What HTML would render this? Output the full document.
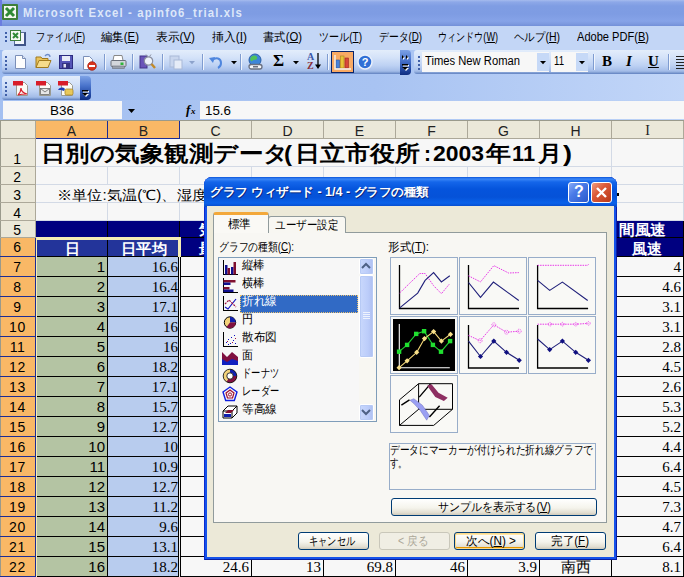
<!DOCTYPE html>
<html><head><meta charset="utf-8"><title>Microsoft Excel - apinfo6_trial.xls</title>
<style>
*{margin:0;padding:0;box-sizing:border-box}
html,body{width:684px;height:577px;overflow:hidden;background:#f7f7f7}
body{position:relative;font-family:"Liberation Sans",sans-serif;font-size:12px;color:#000}
.a{position:absolute}
.t{position:absolute;white-space:nowrap;line-height:1}
u{text-decoration:underline}
.tb{position:absolute;border-radius:3px 0 0 3px;background:linear-gradient(#e3edfb 0,#d5e3f9 30%,#bdd1f3 65%,#a3bce8 88%,#7d9bd0 95%,#5f80c0 100%)}
.cap{position:absolute;background:linear-gradient(#7da2e6 0,#4a74cc 40%,#234aa6 75%,#0f2d80 100%);border-radius:0 4px 4px 0}
.sep{position:absolute;width:1px;height:16px;background:#7f9cd0;box-shadow:1px 0 0 #f0f5fd}
.hdr{position:absolute;background:#ebe8d9;font-size:15px;text-align:center;line-height:1}
.sel{background:#f9b866}
.rn{position:absolute;left:0;width:35px;text-align:center;font-size:14px;line-height:1;letter-spacing:.6px}
.cell{position:absolute;white-space:nowrap;line-height:1}
.num{font-family:"Liberation Serif",serif;font-size:15px;text-align:right}
.btn{position:absolute;height:18px;border:1px solid #003c74;border-radius:3px;background:linear-gradient(#fff 0,#f5f4ec 55%,#e3dfd2 85%,#cfcabb 100%)}
.th{position:absolute;width:68px;height:58px;background:#f9f9f6;border:1px solid #98adc9}
</style></head><body>

<div class="a" style="left:0px;top:0px;width:684px;height:26px;background:linear-gradient(#a6bbee 0,#8da8e8 2px,#7f9de3 6px,#7e9ce3 14px,#86a3e8 21px,#7c99df 24px,#7390d8 26px);"></div>
<div class="a" style="left:0px;top:0px;width:2px;height:26px;background:#6b7de0;"></div>
<div class="a" style="left:2px;top:4px;width:16px;height:16px;background:#f4f7f0;border:2px solid #3f7f3a;border-radius:1px"></div>
<svg class="a" style="left:4px;top:6px" width="12" height="12" viewBox="0 0 12 12"><path d="M2 2L10 10M10 2L2 10" stroke="#2f8a35" stroke-width="3"/></svg>
<div class="t" style="left:23px;top:7px;font-size:12px;color:#dde7f9;font-weight:bold;letter-spacing:1.2px;transform:scaleX(0.945);transform-origin:0 0;">Microsoft Excel - apinfo6_trial.xls</div>
<div class="a" style="left:0px;top:26px;width:684px;height:24px;background:#c3d6f6;"></div>
<div class="a" style="left:5px;top:32px;width:2px;height:2px;background:#3f5fa8;"></div>
<div class="a" style="left:5px;top:36px;width:2px;height:2px;background:#3f5fa8;"></div>
<div class="a" style="left:5px;top:40px;width:2px;height:2px;background:#3f5fa8;"></div>
<div class="a" style="left:14px;top:32px;width:12px;height:14px;background:#f2f6fc;border:1px solid #5a6e9a;border-right:2px solid #3f5488;border-bottom:2px solid #3f5488"></div>
<div class="a" style="left:10px;top:30px;width:11px;height:11px;background:#f4f8f2;border:1px solid #3f7f3a"></div>
<svg class="a" style="left:11px;top:31px" width="9" height="9" viewBox="0 0 9 9"><path d="M2 2L7 7M7 2L2 7" stroke="#2f8a35" stroke-width="2"/></svg>
<div class="t" style="left:36px;top:31px;font-size:12px;transform:scaleX(0.774);transform-origin:0 0;">ファイル(<u>F</u>)</div>
<div class="t" style="left:101px;top:31px;font-size:12px;transform:scaleX(0.950);transform-origin:0 0;">編集(<u>E</u>)</div>
<div class="t" style="left:156px;top:31px;font-size:12px;transform:scaleX(0.975);transform-origin:0 0;">表示(<u>V</u>)</div>
<div class="t" style="left:212px;top:31px;font-size:12px;transform:scaleX(0.990);transform-origin:0 0;">挿入(<u>I</u>)</div>
<div class="t" style="left:263px;top:31px;font-size:12px;transform:scaleX(0.943);transform-origin:0 0;">書式(<u>O</u>)</div>
<div class="t" style="left:319px;top:31px;font-size:12px;transform:scaleX(0.837);transform-origin:0 0;">ツール(<u>T</u>)</div>
<div class="t" style="left:379px;top:31px;font-size:12px;transform:scaleX(0.816);transform-origin:0 0;">データ(<u>D</u>)</div>
<div class="t" style="left:438px;top:31px;font-size:12px;transform:scaleX(0.756);transform-origin:0 0;">ウィンドウ(<u>W</u>)</div>
<div class="t" style="left:514px;top:31px;font-size:12px;transform:scaleX(0.873);transform-origin:0 0;">ヘルプ(<u>H</u>)</div>
<div class="t" style="left:577px;top:31px;font-size:12px;transform:scaleX(0.923);transform-origin:0 0;">Adobe PDF(<u>B</u>)</div>
<div class="a" style="left:0px;top:50px;width:684px;height:51px;background:linear-gradient(90deg,#9ebcf0,#a8c3f2 55%,#c2d6f8);"></div>
<div class="tb" style="left:2px;top:50px;width:399px;height:24px"></div>
<div class="cap" style="left:400px;top:50px;width:11px;height:25px"></div>
<div class="tb" style="left:414px;top:50px;width:270px;height:24px"></div>
<div class="tb" style="left:2px;top:76px;width:79px;height:24px"></div>
<div class="cap" style="left:80px;top:76px;width:11px;height:24px"></div>
<div class="a" style="left:5px;top:56px;width:2px;height:2px;background:#3f5fa8;"></div>
<div class="a" style="left:418px;top:56px;width:2px;height:2px;background:#3f5fa8;"></div>
<div class="a" style="left:5px;top:60px;width:2px;height:2px;background:#3f5fa8;"></div>
<div class="a" style="left:418px;top:60px;width:2px;height:2px;background:#3f5fa8;"></div>
<div class="a" style="left:5px;top:64px;width:2px;height:2px;background:#3f5fa8;"></div>
<div class="a" style="left:418px;top:64px;width:2px;height:2px;background:#3f5fa8;"></div>
<div class="a" style="left:5px;top:68px;width:2px;height:2px;background:#3f5fa8;"></div>
<div class="a" style="left:418px;top:68px;width:2px;height:2px;background:#3f5fa8;"></div>
<div class="a" style="left:5px;top:82px;width:2px;height:2px;background:#3f5fa8;"></div>
<div class="a" style="left:5px;top:86px;width:2px;height:2px;background:#3f5fa8;"></div>
<div class="a" style="left:5px;top:90px;width:2px;height:2px;background:#3f5fa8;"></div>
<div class="a" style="left:5px;top:94px;width:2px;height:2px;background:#3f5fa8;"></div>
<svg class="a" style="left:400px;top:50px" width="11" height="25" viewBox="0 0 11 25"><path d="M3 6l2 2-2 2zM7 6l2 2-2 2z" fill="#fff"/><path d="M2 5l2 2-2 2zM6 5l2 2-2 2z" fill="#000"/><rect x="3" y="15" width="6" height="1.5" fill="#fff"/><path d="M3 18h6l-3 3z" fill="#fff"/><rect x="2" y="14" width="6" height="1.5" fill="#000"/><path d="M2 17h6l-3 3z" fill="#000"/></svg>
<svg class="a" style="left:80px;top:76px" width="11" height="24" viewBox="0 0 11 24"><rect x="3" y="15" width="6" height="1.5" fill="#fff"/><path d="M3 18h6l-3 3z" fill="#fff"/><rect x="2" y="14" width="6" height="1.5" fill="#000"/><path d="M2 17h6l-3 3z" fill="#000"/></svg>
<div class="sep" style="left:104px;top:54px"></div>
<div class="sep" style="left:132px;top:54px"></div>
<div class="sep" style="left:162px;top:54px"></div>
<div class="sep" style="left:202px;top:54px"></div>
<div class="sep" style="left:240px;top:54px"></div>
<div class="sep" style="left:327px;top:54px"></div>
<div class="sep" style="left:593px;top:54px"></div>
<div class="sep" style="left:668px;top:54px"></div>
<svg class="a" style="left:14px;top:54px" width="13" height="16" viewBox="0 0 13 16"><path d="M1.5 1.5h7l3 3v10h-10z" fill="#fdfdfd" stroke="#7b8fb8"/><path d="M8.5 1.5v3h3" fill="#dfe6f3" stroke="#7b8fb8"/></svg>
<svg class="a" style="left:35px;top:53px" width="17" height="16" viewBox="0 0 17 16"><path d="M1 4h5l1 1.5h6v9h-12z" fill="#e9c25a" stroke="#a07a1e"/><path d="M1 14.5l3-7h12l-3 7z" fill="#f6dc8b" stroke="#a07a1e"/><path d="M10 3c1.5-2 4-2 5 0l-1 .3" fill="none" stroke="#6d8cc8" stroke-width="1.3"/></svg>
<svg class="a" style="left:59px;top:55px" width="14" height="14" viewBox="0 0 14 14"><rect x=".5" y=".5" width="13" height="13" fill="#5555b8" stroke="#2c2c80"/><rect x="3" y="1" width="8" height="5" fill="#e8ecf8"/><rect x="3" y="8" width="8" height="5" fill="#343484"/><rect x="4.5" y="9" width="2.5" height="3.5" fill="#e0e0f0"/></svg>
<svg class="a" style="left:82px;top:55px" width="15" height="16" viewBox="0 0 15 16"><path d="M1.5 1.5h6l3 3v10h-9z" fill="#fdfdfd" stroke="#7b8fb8"/><circle cx="10" cy="11" r="4.3" fill="#d8341e" stroke="#a01808" stroke-width=".7"/><rect x="7" y="10" width="6" height="2" fill="#fff"/></svg>
<svg class="a" style="left:110px;top:54px" width="17" height="16" viewBox="0 0 17 16"><path d="M4 1.5h8l1 5h-10z" fill="#fff" stroke="#888"/><rect x="1" y="6.5" width="15" height="6" rx="1" fill="#d3d6dc" stroke="#6a6f7a"/><rect x="2.5" y="12" width="12" height="2.5" fill="#9aa0ac" stroke="#6a6f7a" stroke-width=".6"/><rect x="10.5" y="8.5" width="3" height="2.5" fill="#2fb53a"/></svg>
<svg class="a" style="left:139px;top:53px" width="17" height="17" viewBox="0 0 17 17"><rect x="1" y="3" width="7" height="12" fill="#6a55b8" stroke="#43348a"/><circle cx="9.5" cy="8" r="4.2" fill="#eef3fb" stroke="#8a8fa0" stroke-width="1.2"/><path d="M12.5 11l3.5 4" stroke="#c28a2a" stroke-width="2.4"/><path d="M7 1.5l1.5 2M12 1.5l-1.5 2" stroke="#8a8fa0"/></svg>
<svg class="a" style="left:169px;top:54px" width="14" height="16" viewBox="0 0 14 16"><rect x="1" y="2" width="9" height="11" fill="#c9d6ee" stroke="#a9b9d8"/><rect x="5" y="6" width="8" height="9" fill="#e6ecf7" stroke="#a9b9d8"/></svg>
<svg class="a" style="left:189px;top:61px" width="6" height="4" viewBox="0 0 6 4"><path d="M0 0h6l-3 3.2z" fill="#8da3cc"/></svg>
<svg class="a" style="left:209px;top:55px" width="15" height="14" viewBox="0 0 15 14"><path d="M3 5c4-3 9-2 9 3 0 2-1 4-3 5" fill="none" stroke="#4f86de" stroke-width="2"/><path d="M0 3l6-1-2 6z" fill="#4f86de"/></svg>
<svg class="a" style="left:231px;top:61px" width="6" height="4" viewBox="0 0 6 4"><path d="M0 0h6l-3 3.2z" fill="#000"/></svg>
<svg class="a" style="left:247px;top:53px" width="17" height="18" viewBox="0 0 17 18"><circle cx="8" cy="7" r="6" fill="#3d86d8" stroke="#2a5fa8"/><path d="M4 4c2-2 5-2 6 0s-1 3-3 3-2 2-3 1-1-3 0-4z" fill="#4fc25a"/><rect x="2" y="11.5" width="13" height="4.5" rx="2.2" fill="#f3f5f8" stroke="#6a7080" stroke-width="1.3"/><rect x="6" y="13" width="5" height="1.5" fill="#6a7080"/></svg>
<div class="t" style="left:273px;top:52px;font-size:17px;font-weight:bold;font-family:'Liberation Serif',serif;">Σ</div>
<svg class="a" style="left:293px;top:61px" width="6" height="4" viewBox="0 0 6 4"><path d="M0 0h6l-3 3.2z" fill="#000"/></svg>
<div class="t" style="left:307px;top:52px;font-size:10px;color:#3a57a8;font-weight:bold;font-family:'Liberation Serif',serif;">A</div>
<div class="t" style="left:307px;top:61px;font-size:10px;color:#8a2f3a;font-weight:bold;font-family:'Liberation Serif',serif;">Z</div>
<svg class="a" style="left:314px;top:53px" width="8" height="17" viewBox="0 0 8 17"><path d="M4 0v13" stroke="#000" stroke-width="1.3"/><path d="M1 11.5h6l-3 4.5z" fill="#000"/></svg>
<div class="a" style="left:331px;top:51px;width:23px;height:22px;background:#f9aa64;border:1px solid #0a246a"></div>
<svg class="a" style="left:334px;top:54px" width="18" height="17" viewBox="0 0 18 17"><rect x="2" y="6" width="3.5" height="8" fill="#4a82d8" stroke="#2a55a0" stroke-width=".6"/><rect x="6.5" y="2" width="3.5" height="12" fill="#e9c33a" stroke="#a8861a" stroke-width=".6"/><rect x="11" y="4" width="3.5" height="10" fill="#d8473a" stroke="#9a2a20" stroke-width=".6"/><path d="M1 1v14h16" fill="none" stroke="#f2f2f2" stroke-width="1.4"/></svg>
<svg class="a" style="left:357px;top:54px" width="16" height="16" viewBox="0 0 16 16"><circle cx="8" cy="8" r="7" fill="#2f6fd6" stroke="#e8effb" stroke-width="1.5"/><text x="8" y="12" font-size="11" font-weight="bold" font-family="Liberation Sans" fill="#fff" text-anchor="middle">?</text></svg>
<div class="a" style="left:422px;top:52px;width:127px;height:20px;background:#f7f7f7;"></div>
<div class="t" style="left:425px;top:55px;font-size:12px;transform:scaleX(0.935);transform-origin:0 0;">Times New Roman</div>
<div class="a" style="left:537px;top:53px;width:12px;height:18px;background:#c6d9f7;"></div>
<svg class="a" style="left:540px;top:61px" width="6" height="4" viewBox="0 0 6 4"><path d="M0 0h6l-3 3.2z" fill="#000"/></svg>
<div class="a" style="left:551px;top:52px;width:37px;height:20px;background:#f7f7f7;"></div>
<div class="t" style="left:554px;top:55px;font-size:12px;transform:scaleX(0.802);transform-origin:0 0;">11</div>
<div class="a" style="left:576px;top:53px;width:12px;height:18px;background:#c6d9f7;"></div>
<svg class="a" style="left:579px;top:61px" width="6" height="4" viewBox="0 0 6 4"><path d="M0 0h6l-3 3.2z" fill="#000"/></svg>
<div class="t" style="left:602px;top:54px;font-size:15px;font-weight:bold;font-family:'Liberation Serif',serif;">B</div>
<div class="t" style="left:626px;top:54px;font-size:15px;font-weight:bold;font-style:italic;font-family:'Liberation Serif',serif;">I</div>
<div class="t" style="left:648px;top:54px;font-size:15px;font-weight:bold;font-family:'Liberation Serif',serif;"><u>U</u></div>
<div class="a" style="left:676px;top:56px;width:8px;height:1px;background:#222;"></div>
<div class="a" style="left:676px;top:59px;width:8px;height:1px;background:#222;"></div>
<div class="a" style="left:676px;top:62px;width:8px;height:1px;background:#222;"></div>
<div class="a" style="left:676px;top:65px;width:8px;height:1px;background:#222;"></div>
<div class="a" style="left:676px;top:68px;width:8px;height:1px;background:#222;"></div>
<svg class="a" style="left:13px;top:80px" width="16" height="17" viewBox="0 0 16 17"><path d="M3.5 2.5h8l3 3v10h-11z" fill="#fbfbf6" stroke="#9a9a90"/><rect x="0" y="1" width="10" height="4.5" fill="#d81e2a"/><path d="M5 15c2-2 3-5 3-7 0 3 2 5 6 6-3 0-6 0-9 1z" fill="none" stroke="#d81e2a" stroke-width="1.2"/></svg>
<svg class="a" style="left:36px;top:80px" width="16" height="17" viewBox="0 0 16 17"><path d="M3.5 2.5h8l3 3v10h-11z" fill="#fbfbf6" stroke="#9a9a90"/><rect x="0" y="1" width="10" height="4.5" fill="#d81e2a"/><rect x="4.5" y="8.5" width="9" height="6" fill="#e8e8e8" stroke="#666" stroke-width=".8"/><path d="M4.5 8.5l4.5 3.5 4.5-3.5" fill="none" stroke="#666" stroke-width=".8"/></svg>
<svg class="a" style="left:58px;top:80px" width="16" height="17" viewBox="0 0 16 17"><path d="M3.5 2.5h8l3 3v10h-11z" fill="#fbfbf6" stroke="#9a9a90"/><rect x="0" y="1" width="10" height="4.5" fill="#d81e2a"/><path d="M0 10c2-3 5-3 7-1l-1 2-3-1z" fill="#1c3fb8"/><rect x="7" y="9" width="8" height="6" rx="1.5" fill="#e8c85a" stroke="#a8862a" stroke-width=".8"/></svg>
<div class="a" style="left:0px;top:100px;width:684px;height:20px;background:linear-gradient(90deg,#a4c0f1,#aec7f3 60%,#bcd2f6);"></div>
<div class="a" style="left:3px;top:101px;width:119px;height:18px;background:#f7f7f7;"></div>
<div class="t" style="left:50px;top:104px;font-size:13px;transform:scaleX(1.037);transform-origin:0 0;">B36</div>
<svg class="a" style="left:128px;top:109px" width="7" height="4" viewBox="0 0 7 4"><path d="M0 0h7l-3.5 4z" fill="#000"/></svg>
<div class="a" style="left:200px;top:101px;width:484px;height:18px;background:#f7f7f7;"></div>
<div class="t" style="left:205px;top:104px;font-size:13px;transform:scaleX(1.027);transform-origin:0 0;">15.6</div>
<div class="t" style="left:186px;top:103px;font-size:13px;font-weight:bold;font-style:italic;font-family:'Liberation Serif',serif;">f</div>
<div class="t" style="left:191px;top:107px;font-size:9px;font-weight:bold;font-style:italic;font-family:'Liberation Serif',serif;">x</div>
<div class="a" style="left:0px;top:120px;width:684px;height:457px;background:#f7f7f7;"></div>
<div class="a" style="left:0px;top:120px;width:684px;height:19px;background:#ebe8d9;"></div>
<div class="a" style="left:0px;top:120px;width:36px;height:457px;background:#ebe8d9;"></div>
<div class="a" style="left:0px;top:120px;width:684px;height:1px;background:#9a9a8c;"></div>
<div class="a" style="left:36px;top:121px;width:71px;height:17px;background:#f9b866;"></div>
<div class="a" style="left:107px;top:121px;width:1px;height:17px;background:#1c2c94;"></div>
<div class="t" style="left:36px;top:124px;width:71px;text-align:center;font-size:14px;color:#222">A</div>
<div class="a" style="left:108px;top:121px;width:71px;height:17px;background:#f9b866;"></div>
<div class="a" style="left:179px;top:121px;width:1px;height:17px;background:#1c2c94;"></div>
<div class="t" style="left:108px;top:124px;width:71px;text-align:center;font-size:14px;color:#222">B</div>
<div class="a" style="left:251px;top:121px;width:1px;height:17px;background:#aca899;"></div>
<div class="t" style="left:180px;top:124px;width:71px;text-align:center;font-size:14px;color:#222">C</div>
<div class="a" style="left:323px;top:121px;width:1px;height:17px;background:#aca899;"></div>
<div class="t" style="left:252px;top:124px;width:71px;text-align:center;font-size:14px;color:#222">D</div>
<div class="a" style="left:395px;top:121px;width:1px;height:17px;background:#aca899;"></div>
<div class="t" style="left:324px;top:124px;width:71px;text-align:center;font-size:14px;color:#222">E</div>
<div class="a" style="left:467px;top:121px;width:1px;height:17px;background:#aca899;"></div>
<div class="t" style="left:396px;top:124px;width:71px;text-align:center;font-size:14px;color:#222">F</div>
<div class="a" style="left:539px;top:121px;width:1px;height:17px;background:#aca899;"></div>
<div class="t" style="left:468px;top:124px;width:71px;text-align:center;font-size:14px;color:#222">G</div>
<div class="a" style="left:611px;top:121px;width:1px;height:17px;background:#aca899;"></div>
<div class="t" style="left:540px;top:124px;width:71px;text-align:center;font-size:14px;color:#222">H</div>
<div class="a" style="left:683px;top:121px;width:1px;height:17px;background:#aca899;"></div>
<div class="t" style="left:612px;top:124px;width:71px;text-align:center;font-size:14px;color:#222;font-family:Liberation Serif,serif">I</div>
<div class="a" style="left:0px;top:138px;width:684px;height:1px;background:#aca899;"></div>
<div class="a" style="left:36px;top:138px;width:144px;height:1px;background:#1c2c94;"></div>
<div class="a" style="left:35px;top:121px;width:1px;height:456px;background:#aca899;"></div>
<div class="a" style="left:0px;top:120px;width:1px;height:457px;background:#9a9a8c;"></div>
<div class="a" style="left:0px;top:166px;width:36px;height:1px;background:#aca899;"></div>
<div class="rn" style="top:152px">1</div>
<div class="a" style="left:0px;top:184px;width:36px;height:1px;background:#aca899;"></div>
<div class="rn" style="top:170px">2</div>
<div class="a" style="left:0px;top:202px;width:36px;height:1px;background:#aca899;"></div>
<div class="rn" style="top:188px">3</div>
<div class="a" style="left:0px;top:220px;width:36px;height:1px;background:#aca899;"></div>
<div class="rn" style="top:206px">4</div>
<div class="a" style="left:0px;top:237px;width:36px;height:1px;background:#aca899;"></div>
<div class="rn" style="top:223px">5</div>
<div class="a" style="left:1px;top:238px;width:34px;height:18px;background:#f9b866;"></div>
<div class="a" style="left:0px;top:256px;width:36px;height:1px;background:#1c2c94;"></div>
<div class="rn" style="top:240px">6</div>
<div class="a" style="left:1px;top:257px;width:34px;height:19px;background:#f9b866;"></div>
<div class="a" style="left:0px;top:276px;width:36px;height:1px;background:#1c2c94;"></div>
<div class="rn" style="top:260px">7</div>
<div class="a" style="left:1px;top:277px;width:34px;height:19px;background:#f9b866;"></div>
<div class="a" style="left:0px;top:296px;width:36px;height:1px;background:#1c2c94;"></div>
<div class="rn" style="top:280px">8</div>
<div class="a" style="left:1px;top:297px;width:34px;height:19px;background:#f9b866;"></div>
<div class="a" style="left:0px;top:316px;width:36px;height:1px;background:#1c2c94;"></div>
<div class="rn" style="top:300px">9</div>
<div class="a" style="left:1px;top:317px;width:34px;height:19px;background:#f9b866;"></div>
<div class="a" style="left:0px;top:336px;width:36px;height:1px;background:#1c2c94;"></div>
<div class="rn" style="top:320px">10</div>
<div class="a" style="left:1px;top:337px;width:34px;height:19px;background:#f9b866;"></div>
<div class="a" style="left:0px;top:356px;width:36px;height:1px;background:#1c2c94;"></div>
<div class="rn" style="top:340px">11</div>
<div class="a" style="left:1px;top:357px;width:34px;height:19px;background:#f9b866;"></div>
<div class="a" style="left:0px;top:376px;width:36px;height:1px;background:#1c2c94;"></div>
<div class="rn" style="top:360px">12</div>
<div class="a" style="left:1px;top:377px;width:34px;height:19px;background:#f9b866;"></div>
<div class="a" style="left:0px;top:396px;width:36px;height:1px;background:#1c2c94;"></div>
<div class="rn" style="top:380px">13</div>
<div class="a" style="left:1px;top:397px;width:34px;height:19px;background:#f9b866;"></div>
<div class="a" style="left:0px;top:416px;width:36px;height:1px;background:#1c2c94;"></div>
<div class="rn" style="top:400px">14</div>
<div class="a" style="left:1px;top:417px;width:34px;height:19px;background:#f9b866;"></div>
<div class="a" style="left:0px;top:436px;width:36px;height:1px;background:#1c2c94;"></div>
<div class="rn" style="top:420px">15</div>
<div class="a" style="left:1px;top:437px;width:34px;height:19px;background:#f9b866;"></div>
<div class="a" style="left:0px;top:456px;width:36px;height:1px;background:#1c2c94;"></div>
<div class="rn" style="top:440px">16</div>
<div class="a" style="left:1px;top:457px;width:34px;height:19px;background:#f9b866;"></div>
<div class="a" style="left:0px;top:476px;width:36px;height:1px;background:#1c2c94;"></div>
<div class="rn" style="top:460px">17</div>
<div class="a" style="left:1px;top:477px;width:34px;height:19px;background:#f9b866;"></div>
<div class="a" style="left:0px;top:496px;width:36px;height:1px;background:#1c2c94;"></div>
<div class="rn" style="top:480px">18</div>
<div class="a" style="left:1px;top:497px;width:34px;height:19px;background:#f9b866;"></div>
<div class="a" style="left:0px;top:516px;width:36px;height:1px;background:#1c2c94;"></div>
<div class="rn" style="top:500px">19</div>
<div class="a" style="left:1px;top:517px;width:34px;height:19px;background:#f9b866;"></div>
<div class="a" style="left:0px;top:536px;width:36px;height:1px;background:#1c2c94;"></div>
<div class="rn" style="top:520px">20</div>
<div class="a" style="left:1px;top:537px;width:34px;height:19px;background:#f9b866;"></div>
<div class="a" style="left:0px;top:556px;width:36px;height:1px;background:#1c2c94;"></div>
<div class="rn" style="top:540px">21</div>
<div class="a" style="left:1px;top:557px;width:34px;height:19px;background:#f9b866;"></div>
<div class="a" style="left:0px;top:576px;width:36px;height:1px;background:#1c2c94;"></div>
<div class="rn" style="top:560px">22</div>
<div class="a" style="left:35px;top:238px;width:1px;height:339px;background:#1c2c94;"></div>
<div class="a" style="left:36px;top:166px;width:648px;height:1px;background:#d3dae6;"></div>
<div class="a" style="left:36px;top:184px;width:648px;height:1px;background:#d3dae6;"></div>
<div class="a" style="left:36px;top:202px;width:648px;height:1px;background:#d3dae6;"></div>
<div class="a" style="left:36px;top:220px;width:648px;height:1px;background:#d3dae6;"></div>
<div class="a" style="left:107px;top:139px;width:1px;height:82px;background:#d3dae6;"></div>
<div class="a" style="left:179px;top:139px;width:1px;height:82px;background:#d3dae6;"></div>
<div class="a" style="left:251px;top:139px;width:1px;height:82px;background:#d3dae6;"></div>
<div class="a" style="left:323px;top:139px;width:1px;height:82px;background:#d3dae6;"></div>
<div class="a" style="left:395px;top:139px;width:1px;height:82px;background:#d3dae6;"></div>
<div class="a" style="left:467px;top:139px;width:1px;height:82px;background:#d3dae6;"></div>
<div class="a" style="left:539px;top:139px;width:1px;height:82px;background:#d3dae6;"></div>
<div class="a" style="left:611px;top:139px;width:1px;height:82px;background:#d3dae6;"></div>
<div class="a" style="left:683px;top:139px;width:1px;height:82px;background:#d3dae6;"></div>
<div class="a" style="left:36px;top:139px;width:575px;height:27px;background:#f7f7f7;"></div>
<div class="a" style="left:36px;top:185px;width:420px;height:17px;background:#f7f7f7;"></div>
<div class="t" style="left:41.2px;top:143px;font-size:22px;font-weight:bold;transform:scaleX(1.110);transform-origin:0 0;">日別の気象観測データ</div>
<div class="t" style="left:284px;top:143px;font-size:22px;font-weight:bold;transform:scaleX(1.092);transform-origin:0 0;">(</div>
<div class="t" style="left:295px;top:143px;font-size:22px;font-weight:bold;transform:scaleX(1.136);transform-origin:0 0;">日立市役所</div>
<div class="t" style="left:424px;top:143px;font-size:22px;font-weight:bold;transform:scaleX(0.955);transform-origin:0 0;">:</div>
<div class="t" style="left:433px;top:143px;font-size:22px;font-weight:bold;transform:scaleX(1.042);transform-origin:0 0;">2003</div>
<div class="t" style="left:486px;top:143px;font-size:22px;font-weight:bold;transform:scaleX(1.136);transform-origin:0 0;">年</div>
<div class="t" style="left:512px;top:143px;font-size:22px;font-weight:bold;transform:scaleX(0.989);transform-origin:0 0;">11</div>
<div class="t" style="left:538px;top:143px;font-size:22px;font-weight:bold;transform:scaleX(1.091);transform-origin:0 0;">月</div>
<div class="t" style="left:563px;top:143px;font-size:22px;font-weight:bold;transform:scaleX(1.228);transform-origin:0 0;">)</div>
<div class="t" style="left:57px;top:188px;font-size:14px;transform:scaleX(1.085);transform-origin:0 0;">※単位:気温(℃)、湿度</div>
<div class="a" style="left:617px;top:193px;width:2px;height:3px;background:#000;"></div>
<div class="a" style="left:36px;top:221px;width:648px;height:36px;background:#000080;"></div>
<div class="a" style="left:36px;top:239px;width:143px;height:18px;background:#23349a;"></div>
<div class="a" style="left:36px;top:238px;width:145px;height:1px;background:#000;"></div>
<div class="a" style="left:36px;top:238px;width:144px;height:2px;background:#f7f1c0;opacity:.0"></div>
<div class="a" style="left:36px;top:257px;width:72px;height:20px;background:#b4c4a3;"></div>
<div class="a" style="left:108px;top:257px;width:72px;height:20px;background:#b8ccee;"></div>
<div class="a" style="left:36px;top:276px;width:648px;height:1px;background:#000;"></div>
<div class="cell" style="left:36px;width:69px;top:259px;font-size:15px;text-align:right">1</div>
<div class="cell num" style="left:108px;width:70px;top:260px">16.6</div>
<div class="cell num" style="left:612px;width:69px;top:260px">4</div>
<div class="a" style="left:36px;top:277px;width:72px;height:20px;background:#b4c4a3;"></div>
<div class="a" style="left:108px;top:277px;width:72px;height:20px;background:#b8ccee;"></div>
<div class="a" style="left:36px;top:296px;width:648px;height:1px;background:#000;"></div>
<div class="cell" style="left:36px;width:69px;top:279px;font-size:15px;text-align:right">2</div>
<div class="cell num" style="left:108px;width:70px;top:280px">16.4</div>
<div class="cell num" style="left:612px;width:69px;top:280px">4.6</div>
<div class="a" style="left:36px;top:297px;width:72px;height:20px;background:#b4c4a3;"></div>
<div class="a" style="left:108px;top:297px;width:72px;height:20px;background:#b8ccee;"></div>
<div class="a" style="left:36px;top:316px;width:648px;height:1px;background:#000;"></div>
<div class="cell" style="left:36px;width:69px;top:299px;font-size:15px;text-align:right">3</div>
<div class="cell num" style="left:108px;width:70px;top:300px">17.1</div>
<div class="cell num" style="left:612px;width:69px;top:300px">3.1</div>
<div class="a" style="left:36px;top:317px;width:72px;height:20px;background:#b4c4a3;"></div>
<div class="a" style="left:108px;top:317px;width:72px;height:20px;background:#b8ccee;"></div>
<div class="a" style="left:36px;top:336px;width:648px;height:1px;background:#000;"></div>
<div class="cell" style="left:36px;width:69px;top:319px;font-size:15px;text-align:right">4</div>
<div class="cell num" style="left:108px;width:70px;top:320px">16</div>
<div class="cell num" style="left:612px;width:69px;top:320px">3.1</div>
<div class="a" style="left:36px;top:337px;width:72px;height:20px;background:#b4c4a3;"></div>
<div class="a" style="left:108px;top:337px;width:72px;height:20px;background:#b8ccee;"></div>
<div class="a" style="left:36px;top:356px;width:648px;height:1px;background:#000;"></div>
<div class="cell" style="left:36px;width:69px;top:339px;font-size:15px;text-align:right">5</div>
<div class="cell num" style="left:108px;width:70px;top:340px">16</div>
<div class="cell num" style="left:612px;width:69px;top:340px">2.8</div>
<div class="a" style="left:36px;top:357px;width:72px;height:20px;background:#b4c4a3;"></div>
<div class="a" style="left:108px;top:357px;width:72px;height:20px;background:#b8ccee;"></div>
<div class="a" style="left:36px;top:376px;width:648px;height:1px;background:#000;"></div>
<div class="cell" style="left:36px;width:69px;top:359px;font-size:15px;text-align:right">6</div>
<div class="cell num" style="left:108px;width:70px;top:360px">18.2</div>
<div class="cell num" style="left:612px;width:69px;top:360px">4.5</div>
<div class="a" style="left:36px;top:377px;width:72px;height:20px;background:#b4c4a3;"></div>
<div class="a" style="left:108px;top:377px;width:72px;height:20px;background:#b8ccee;"></div>
<div class="a" style="left:36px;top:396px;width:648px;height:1px;background:#000;"></div>
<div class="cell" style="left:36px;width:69px;top:379px;font-size:15px;text-align:right">7</div>
<div class="cell num" style="left:108px;width:70px;top:380px">17.1</div>
<div class="cell num" style="left:612px;width:69px;top:380px">2.6</div>
<div class="a" style="left:36px;top:397px;width:72px;height:20px;background:#b4c4a3;"></div>
<div class="a" style="left:108px;top:397px;width:72px;height:20px;background:#b8ccee;"></div>
<div class="a" style="left:36px;top:416px;width:648px;height:1px;background:#000;"></div>
<div class="cell" style="left:36px;width:69px;top:399px;font-size:15px;text-align:right">8</div>
<div class="cell num" style="left:108px;width:70px;top:400px">15.7</div>
<div class="cell num" style="left:612px;width:69px;top:400px">5.3</div>
<div class="a" style="left:36px;top:417px;width:72px;height:20px;background:#b4c4a3;"></div>
<div class="a" style="left:108px;top:417px;width:72px;height:20px;background:#b8ccee;"></div>
<div class="a" style="left:36px;top:436px;width:648px;height:1px;background:#000;"></div>
<div class="cell" style="left:36px;width:69px;top:419px;font-size:15px;text-align:right">9</div>
<div class="cell num" style="left:108px;width:70px;top:420px">12.7</div>
<div class="cell num" style="left:612px;width:69px;top:420px">5.2</div>
<div class="a" style="left:36px;top:437px;width:72px;height:20px;background:#b4c4a3;"></div>
<div class="a" style="left:108px;top:437px;width:72px;height:20px;background:#b8ccee;"></div>
<div class="a" style="left:36px;top:456px;width:648px;height:1px;background:#000;"></div>
<div class="cell" style="left:36px;width:69px;top:439px;font-size:15px;text-align:right">10</div>
<div class="cell num" style="left:108px;width:70px;top:440px">10</div>
<div class="cell num" style="left:612px;width:69px;top:440px">4.4</div>
<div class="a" style="left:36px;top:457px;width:72px;height:20px;background:#b4c4a3;"></div>
<div class="a" style="left:108px;top:457px;width:72px;height:20px;background:#b8ccee;"></div>
<div class="a" style="left:36px;top:476px;width:648px;height:1px;background:#000;"></div>
<div class="cell" style="left:36px;width:69px;top:459px;font-size:15px;text-align:right">11</div>
<div class="cell num" style="left:108px;width:70px;top:460px">10.9</div>
<div class="cell num" style="left:612px;width:69px;top:460px">6.4</div>
<div class="a" style="left:36px;top:477px;width:72px;height:20px;background:#b4c4a3;"></div>
<div class="a" style="left:108px;top:477px;width:72px;height:20px;background:#b8ccee;"></div>
<div class="a" style="left:36px;top:496px;width:648px;height:1px;background:#000;"></div>
<div class="cell" style="left:36px;width:69px;top:479px;font-size:15px;text-align:right">12</div>
<div class="cell num" style="left:108px;width:70px;top:480px">12.7</div>
<div class="cell num" style="left:612px;width:69px;top:480px">4.5</div>
<div class="a" style="left:36px;top:497px;width:72px;height:20px;background:#b4c4a3;"></div>
<div class="a" style="left:108px;top:497px;width:72px;height:20px;background:#b8ccee;"></div>
<div class="a" style="left:36px;top:516px;width:648px;height:1px;background:#000;"></div>
<div class="cell" style="left:36px;width:69px;top:499px;font-size:15px;text-align:right">13</div>
<div class="cell num" style="left:108px;width:70px;top:500px">11.2</div>
<div class="cell num" style="left:612px;width:69px;top:500px">7.3</div>
<div class="a" style="left:36px;top:517px;width:72px;height:20px;background:#b4c4a3;"></div>
<div class="a" style="left:108px;top:517px;width:72px;height:20px;background:#b8ccee;"></div>
<div class="a" style="left:36px;top:536px;width:648px;height:1px;background:#000;"></div>
<div class="cell" style="left:36px;width:69px;top:519px;font-size:15px;text-align:right">14</div>
<div class="cell num" style="left:108px;width:70px;top:520px">9.6</div>
<div class="cell num" style="left:612px;width:69px;top:520px">4.7</div>
<div class="a" style="left:36px;top:537px;width:72px;height:20px;background:#b4c4a3;"></div>
<div class="a" style="left:108px;top:537px;width:72px;height:20px;background:#b8ccee;"></div>
<div class="a" style="left:36px;top:556px;width:648px;height:1px;background:#000;"></div>
<div class="cell" style="left:36px;width:69px;top:539px;font-size:15px;text-align:right">15</div>
<div class="cell num" style="left:108px;width:70px;top:540px">13.1</div>
<div class="cell num" style="left:612px;width:69px;top:540px">6.4</div>
<div class="a" style="left:36px;top:557px;width:72px;height:20px;background:#b4c4a3;"></div>
<div class="a" style="left:108px;top:557px;width:72px;height:20px;background:#b8ccee;"></div>
<div class="a" style="left:36px;top:576px;width:648px;height:1px;background:#000;"></div>
<div class="cell" style="left:36px;width:69px;top:559px;font-size:15px;text-align:right">16</div>
<div class="cell num" style="left:108px;width:70px;top:560px">18.2</div>
<div class="cell num" style="left:612px;width:69px;top:560px">8.1</div>
<div class="a" style="left:107px;top:221px;width:1px;height:356px;background:#000;"></div>
<div class="a" style="left:179px;top:221px;width:1px;height:356px;background:#000;"></div>
<div class="a" style="left:251px;top:221px;width:1px;height:356px;background:#000;"></div>
<div class="a" style="left:323px;top:221px;width:1px;height:356px;background:#000;"></div>
<div class="a" style="left:395px;top:221px;width:1px;height:356px;background:#000;"></div>
<div class="a" style="left:467px;top:221px;width:1px;height:356px;background:#000;"></div>
<div class="a" style="left:539px;top:221px;width:1px;height:356px;background:#000;"></div>
<div class="a" style="left:611px;top:221px;width:1px;height:356px;background:#000;"></div>
<div class="a" style="left:683px;top:221px;width:1px;height:356px;background:#000;"></div>
<div class="a" style="left:36px;top:237px;width:648px;height:1px;background:#000;"></div>
<div class="a" style="left:36px;top:256px;width:648px;height:1px;background:#000;"></div>
<div class="a" style="left:36px;top:237px;width:145px;height:3px;background:#f5ecb5;"></div>
<div class="a" style="left:36px;top:237px;width:1px;height:340px;background:#f5ecb5;"></div>
<div class="a" style="left:178px;top:237px;width:3px;height:20px;background:#f5ecb5;"></div>
<div class="a" style="left:178px;top:257px;width:1px;height:320px;background:#000;"></div>
<div class="a" style="left:179px;top:257px;width:1px;height:320px;background:#f0f0f0;"></div>
<div class="a" style="left:180px;top:257px;width:1px;height:320px;background:#000;"></div>
<div class="t" style="left:65px;top:241px;font-size:15px;color:#fff;font-weight:bold;">日</div>
<div class="t" style="left:121px;top:241px;font-size:15px;color:#fff;font-weight:bold;transform:scaleX(1.022);transform-origin:0 0;">日平均</div>
<div class="t" style="left:619px;top:222px;font-size:15px;color:#fff;font-weight:bold;transform:scaleX(1.044);transform-origin:0 0;">間風速</div>
<div class="t" style="left:632px;top:241px;font-size:15px;color:#fff;font-weight:bold;transform:scaleX(1.000);transform-origin:0 0;">風速</div>
<div class="t" style="left:199px;top:222px;font-size:15px;color:#fff;font-weight:bold;">気</div>
<div class="t" style="left:199px;top:241px;font-size:15px;color:#fff;font-weight:bold;">最</div>
<div class="cell num" style="left:180px;width:69px;top:560px">24.6</div>
<div class="cell num" style="left:252px;width:69px;top:560px">13</div>
<div class="cell num" style="left:324px;width:69px;top:560px">69.8</div>
<div class="cell num" style="left:396px;width:69px;top:560px">46</div>
<div class="cell num" style="left:468px;width:69px;top:560px">3.9</div>
<div class="t" style="left:561px;top:559px;font-size:15px;transform:scaleX(1.000);transform-origin:0 0;">南西</div>
<div class="a" style="left:204px;top:177px;width:413px;height:383px;background:#1552ea;border-radius:8px 8px 0 0;box-shadow:inset 1px 0 0 #0a2ad0,inset -1px 0 0 #0a1fa8,inset 0 -1px 0 #0a1fa0"></div>
<div class="a" style="left:204px;top:177px;width:413px;height:30px;background:linear-gradient(#0a54d8 0,#3a86f7 2px,#1466ea 5px,#0554dc 12px,#0552d8 20px,#0a62ea 26px,#0648c8 30px);border-radius:8px 8px 0 0"></div>
<div class="a" style="left:207px;top:206px;width:407px;height:351px;background:#ece9d8;"></div>
<div class="t" style="left:211px;top:187px;font-size:12px;color:#0a2a80;font-weight:bold;transform:scaleX(1.046);transform-origin:0 0;">グラフ ウィザード - 1/4 - グラフの種類</div>
<div class="t" style="left:210px;top:186px;font-size:12px;color:#fff;font-weight:bold;transform:scaleX(1.046);transform-origin:0 0;">グラフ ウィザード - 1/4 - グラフの種類</div>
<div class="a" style="left:568px;top:182px;width:21px;height:21px;background:linear-gradient(135deg,#86aaf6 0,#4a7be8 40%,#2a58cc 100%);border:1px solid #fff;border-radius:3px"></div>
<div class="t" style="left:574px;top:184px;font-size:16px;color:#fff;font-weight:bold;">?</div>
<div class="a" style="left:591px;top:182px;width:21px;height:21px;background:linear-gradient(135deg,#ee9c80 0,#dc5a38 40%,#b8381a 100%);border:1px solid #fff;border-radius:3px"></div>
<svg class="a" style="left:591px;top:182px" width="21" height="21" viewBox="0 0 21 21"><path d="M6 6L15 15M15 6L6 15" stroke="#fff" stroke-width="2.4"/></svg>
<div class="a" style="left:213px;top:232px;width:394px;height:291px;background:#f8f7f3;border:1px solid #919b9c"></div>
<div class="a" style="left:268px;top:216px;width:78px;height:17px;background:#f8f7f2;border:1px solid #919b9c;border-bottom:none;border-radius:3px 3px 0 0"></div>
<div class="t" style="left:275px;top:219px;font-size:12px;transform:scaleX(0.875);transform-origin:0 0;">ユーザー設定</div>
<div class="a" style="left:213px;top:212px;width:56px;height:21px;background:#faf9f5;border:1px solid #919b9c;border-bottom:none;border-top:3px solid #f3a83a;border-radius:3px 3px 0 0"></div>
<div class="t" style="left:228px;top:218px;font-size:12px;transform:scaleX(0.958);transform-origin:0 0;">標準</div>
<div class="t" style="left:219px;top:241px;font-size:12px;transform:scaleX(0.815);transform-origin:0 0;">グラフの種類(<u>C</u>):</div>
<div class="t" style="left:388px;top:241px;font-size:12px;transform:scaleX(0.960);transform-origin:0 0;">形式(<u>T</u>):</div>
<div class="a" style="left:218px;top:257px;width:159px;height:165px;background:#f7f7f7;border:1px solid #7f9db9"></div>
<div class="t" style="left:242px;top:259px;font-size:12px;transform:scaleX(0.958);transform-origin:0 0;">縦棒</div>
<div class="t" style="left:242px;top:277px;font-size:12px;transform:scaleX(0.958);transform-origin:0 0;">横棒</div>
<div class="a" style="left:240px;top:295px;width:118px;height:18px;background:#316ac5;outline:1px dotted #e8c070;outline-offset:-1px"></div>
<div class="t" style="left:242px;top:295px;font-size:12px;color:#fff;transform:scaleX(0.972);transform-origin:0 0;">折れ線</div>
<div class="t" style="left:242px;top:313px;font-size:12px;transform:scaleX(0.917);transform-origin:0 0;">円</div>
<div class="t" style="left:242px;top:331px;font-size:12px;transform:scaleX(0.972);transform-origin:0 0;">散布図</div>
<div class="t" style="left:242px;top:349px;font-size:12px;transform:scaleX(0.917);transform-origin:0 0;">面</div>
<div class="t" style="left:242px;top:367px;font-size:12px;transform:scaleX(0.771);transform-origin:0 0;">ドーナツ</div>
<div class="t" style="left:242px;top:385px;font-size:12px;transform:scaleX(0.771);transform-origin:0 0;">レーダー</div>
<div class="t" style="left:242px;top:403px;font-size:12px;transform:scaleX(0.972);transform-origin:0 0;">等高線</div>
<svg class="a" style="left:222px;top:260px" width="16" height="16" viewBox="0 0 16 16"><path d="M1.5 0v14.5h14.5" fill="none" stroke="#000" shape-rendering="crispEdges"/><rect x="3" y="5" width="2.5" height="9.5" fill="#101090"/><rect x="5.5" y="8" width="2.5" height="6.5" fill="#801030"/><rect x="9" y="7" width="2.5" height="7.5" fill="#101090"/><rect x="11.5" y="2" width="2.5" height="12.5" fill="#801030"/></svg>
<svg class="a" style="left:222px;top:278px" width="16" height="16" viewBox="0 0 16 16"><path d="M1.5 0v14.5h14.5" fill="none" stroke="#000" shape-rendering="crispEdges"/><rect x="1.5" y="2" width="12" height="2.5" fill="#801030"/><rect x="1.5" y="4.5" width="7" height="2.5" fill="#101090"/><rect x="1.5" y="9" width="6" height="2.5" fill="#801030"/><rect x="1.5" y="11.5" width="10" height="2.5" fill="#101090"/></svg>
<svg class="a" style="left:222px;top:296px" width="16" height="16" viewBox="0 0 16 16"><path d="M1.5 0v14.5h14.5" fill="none" stroke="#000" shape-rendering="crispEdges"/><path d="M3 11l3 2 4-5 4-5" fill="none" stroke="#1010c0" stroke-width="1.2"/><path d="M3 8l4-4 4 4 3 3" fill="none" stroke="#a01040" stroke-width="1.2" stroke-dasharray="2 1"/></svg>
<svg class="a" style="left:222px;top:314px" width="16" height="16" viewBox="0 0 16 16"><circle cx="8" cy="8.5" r="5.7" fill="#f3d27a" stroke="#000"/><path d="M8 8.5V2.8A5.7 5.7 0 0 1 13.7 8.5z" fill="#1020b0"/><path d="M8 8.5h5.7A5.7 5.7 0 0 1 4.5 13z" fill="#801040"/></svg>
<svg class="a" style="left:222px;top:332px" width="16" height="16" viewBox="0 0 16 16"><path d="M1.5 0v14.5h14.5" fill="none" stroke="#000" shape-rendering="crispEdges"/><g fill="#1010c0"><rect x="4" y="10" width="1" height="1"/><rect x="6" y="7" width="1" height="1"/><rect x="8" y="11" width="1" height="1"/><rect x="9" y="5" width="1" height="1"/><rect x="11" y="8" width="1" height="1"/><rect x="12" y="3" width="1" height="1"/><rect x="13" y="11" width="1" height="1"/><rect x="6" y="12" width="1" height="1"/></g><g fill="#a01040"><rect x="5" y="9" width="1" height="1"/><rect x="10" y="10" width="1" height="1"/><rect x="13" y="6" width="1" height="1"/></g></svg>
<svg class="a" style="left:222px;top:350px" width="16" height="16" viewBox="0 0 16 16"><path d="M0 2l5 5 5-5 6 5v8H0z" fill="#801040"/><path d="M0 9l5 3 5-3 6 2v4H0z" fill="#1020c0"/></svg>
<svg class="a" style="left:222px;top:368px" width="16" height="16" viewBox="0 0 16 16"><circle cx="8" cy="8" r="5" fill="none" stroke="#f3d27a" stroke-width="3.6"/><path d="M8 3a5 5 0 0 1 5 5" fill="none" stroke="#1020b0" stroke-width="3.6"/><path d="M13 8a5 5 0 0 1-7.5 4.3" fill="none" stroke="#801040" stroke-width="3.6"/><circle cx="8" cy="8" r="6.8" fill="none" stroke="#000" stroke-width=".8"/><circle cx="8" cy="8" r="3.2" fill="#fff" stroke="#000" stroke-width=".8"/></svg>
<svg class="a" style="left:222px;top:386px" width="16" height="16" viewBox="0 0 16 16"><path d="M8 1l7 5-2.7 8.5H3.7L1 6z" fill="none" stroke="#1020e0" stroke-width="1.4"/><path d="M8 4l4 3-1.5 5h-5L4 7z" fill="none" stroke="#a01030" stroke-width="1.2"/><circle cx="8" cy="8.5" r="1.6" fill="none" stroke="#a01030"/></svg>
<svg class="a" style="left:222px;top:404px" width="16" height="16" viewBox="0 0 16 16"><path d="M1 7l5-5h9v7l-5 5H1z" fill="#fff" stroke="#000"/><path d="M1 7h9v7M10 7l5-5" fill="none" stroke="#000"/><path d="M3 9l3-3h6l-3 3z" fill="#801030"/><path d="M2 10h7v3H2z" fill="#1020b0"/></svg>
<div class="a" style="left:359px;top:258px;width:17px;height:163px;background:#f8f7f2;"></div>
<div class="a" style="left:359px;top:258px;width:15px;height:17px;background:linear-gradient(90deg,#c9d8fc,#bccdfa 60%,#aebff0);border:1px solid #fff;border-radius:2px;box-shadow:inset 0 0 0 1px #b7caf5"></div>
<svg class="a" style="left:358px;top:258px" width="16" height="16" viewBox="0 0 16 16"><path d="M4 10l4-4 4 4" fill="none" stroke="#4d6185" stroke-width="2"/></svg>
<div class="a" style="left:359px;top:275px;width:15px;height:83px;background:linear-gradient(90deg,#c9d8fc,#bccdfa 60%,#aebff0);border:1px solid #fff;border-radius:2px;box-shadow:inset 0 0 0 1px #b7caf5"></div>
<div class="a" style="left:363px;top:312px;width:7px;height:1px;background:#eef3fe;"></div>
<div class="a" style="left:363px;top:314px;width:7px;height:1px;background:#eef3fe;"></div>
<div class="a" style="left:363px;top:316px;width:7px;height:1px;background:#eef3fe;"></div>
<div class="a" style="left:363px;top:318px;width:7px;height:1px;background:#eef3fe;"></div>
<div class="a" style="left:359px;top:404px;width:15px;height:17px;background:linear-gradient(90deg,#c9d8fc,#bccdfa 60%,#aebff0);border:1px solid #fff;border-radius:2px;box-shadow:inset 0 0 0 1px #b7caf5"></div>
<svg class="a" style="left:358px;top:404px" width="16" height="16" viewBox="0 0 16 16"><path d="M4 6l4 4 4-4" fill="none" stroke="#4d6185" stroke-width="2"/></svg>
<div class="th" style="left:390px;top:257px"></div>
<div class="th" style="left:459px;top:257px"></div>
<div class="th" style="left:528px;top:257px"></div>
<div class="th" style="left:390px;top:316px"></div>
<div class="th" style="left:459px;top:316px"></div>
<div class="th" style="left:528px;top:316px"></div>
<div class="th" style="left:390px;top:375px"></div>
<svg class="a" style="left:0;top:0" width="684" height="577" viewBox="0 0 684 577"><path d="M399.5 265v43.5h50.5" fill="none" stroke="#000" stroke-width="1.3"/><polyline points="399.7,293.0 409.3,283.6 419.8,273.5 425.1,273.5 433.6,285.7 441.4,293.7 449.8,283.6" fill="none" stroke="#e838e8" stroke-width="1" stroke-dasharray="1.5 1"/><polyline points="399.7,307.9 417.7,293.1 425.1,280.4 433.6,272.6 441.4,281.9 449.8,275.8" fill="none" stroke="#20207a" stroke-width="1.1"/><path d="M468.5 265v43.5h50.5" fill="none" stroke="#000" stroke-width="1.3"/><polyline points="468.5,275.8 480.5,281.9 493.8,265.6 508.6,273.0 518.8,272.6" fill="none" stroke="#e838e8" stroke-width="1" stroke-dasharray="1.5 1"/><polyline points="468.5,282.5 480.5,297.3 493.4,282.1 518.8,300.5" fill="none" stroke="#20207a" stroke-width="1.1"/><path d="M537.6 265v43.5h50.5" fill="none" stroke="#000" stroke-width="1.3"/><polyline points="537.6,265.3 587.7,265.3 588.5,264.3" fill="none" stroke="#e838e8" stroke-width="1" stroke-dasharray="1.5 1"/><polyline points="537.6,280.4 549.7,290.4 562.4,282.1 587.7,300.5" fill="none" stroke="#20207a" stroke-width="1.1"/><rect x="393" y="319" width="62" height="52" fill="#000"/><path d="M399.3 324v43.7h50.5" fill="none" stroke="#fff" stroke-width="1.1"/><polyline points="399.1,351.7 407.1,344.9 416.2,333.9 424.1,331.2 432.9,344.9 441.0,351.7 450.1,341.1" fill="none" stroke="#20d030" stroke-width="1.1"/><rect x="396.9" y="349.5" width="4.4" height="4.4" fill="#20e030"/><rect x="404.9" y="342.7" width="4.4" height="4.4" fill="#20e030"/><rect x="414.0" y="331.7" width="4.4" height="4.4" fill="#20e030"/><rect x="421.9" y="329.0" width="4.4" height="4.4" fill="#20e030"/><rect x="430.7" y="342.7" width="4.4" height="4.4" fill="#20e030"/><rect x="438.8" y="349.5" width="4.4" height="4.4" fill="#20e030"/><rect x="447.9" y="338.9" width="4.4" height="4.4" fill="#20e030"/><polyline points="399.1,367.7 407.1,360.8 416.7,352.3 424.5,338.6 433.6,331.6 441.4,341.1 450.5,334.3" fill="none" stroke="#f5d878" stroke-width="1.1"/><path d="M399.1 365.1l2.6 2.6l-2.6 2.6l-2.6 -2.6z" fill="#f8e08a"/><path d="M407.1 358.2l2.6 2.6l-2.6 2.6l-2.6 -2.6z" fill="#f8e08a"/><path d="M416.7 349.7l2.6 2.6l-2.6 2.6l-2.6 -2.6z" fill="#f8e08a"/><path d="M424.5 336.0l2.6 2.6l-2.6 2.6l-2.6 -2.6z" fill="#f8e08a"/><path d="M433.6 329.0l2.6 2.6l-2.6 2.6l-2.6 -2.6z" fill="#f8e08a"/><path d="M441.4 338.5l2.6 2.6l-2.6 2.6l-2.6 -2.6z" fill="#f8e08a"/><path d="M450.5 331.7l2.6 2.6l-2.6 2.6l-2.6 -2.6z" fill="#f8e08a"/><path d="M468.5 325v43h50.5" fill="none" stroke="#000" stroke-width="1.3"/><polyline points="468.5,335.4 480.1,340.7 493.8,324.8 506.5,332.2 519.2,331.2" fill="none" stroke="#e838e8" stroke-width="1" stroke-dasharray="1.5 1"/><circle cx="480.1" cy="340.7" r="2" fill="none" stroke="#e838e8" stroke-width=".8" stroke-dasharray="1 .8"/><circle cx="493.8" cy="324.8" r="2" fill="none" stroke="#e838e8" stroke-width=".8" stroke-dasharray="1 .8"/><circle cx="506.5" cy="332.2" r="2" fill="none" stroke="#e838e8" stroke-width=".8" stroke-dasharray="1 .8"/><circle cx="519.2" cy="331.2" r="2" fill="none" stroke="#e838e8" stroke-width=".8" stroke-dasharray="1 .8"/><polyline points="468.5,341.1 480.5,356.5 493.8,341.1 506.5,352.3 519.2,360.3" fill="none" stroke="#20207a" stroke-width="1.1"/><path d="M480.5 353.9l2.6 2.6l-2.6 2.6l-2.6 -2.6z" fill="#101080"/><path d="M493.8 338.5l2.6 2.6l-2.6 2.6l-2.6 -2.6z" fill="#101080"/><path d="M506.5 349.7l2.6 2.6l-2.6 2.6l-2.6 -2.6z" fill="#101080"/><path d="M519.2 357.7l2.6 2.6l-2.6 2.6l-2.6 -2.6z" fill="#101080"/><path d="M537.6 325v43h50.5" fill="none" stroke="#000" stroke-width="1.3"/><polyline points="537.6,324.2 550.0,324.2 562.4,324.2 575.7,324.2 588.4,323.4" fill="none" stroke="#e838e8" stroke-width="1" stroke-dasharray="1.5 1"/><circle cx="550" cy="324.2" r="1.8" fill="none" stroke="#e838e8" stroke-width=".8" stroke-dasharray="1 .8"/><circle cx="562.4" cy="324.2" r="1.8" fill="none" stroke="#e838e8" stroke-width=".8" stroke-dasharray="1 .8"/><circle cx="575.7" cy="324.2" r="1.8" fill="none" stroke="#e838e8" stroke-width=".8" stroke-dasharray="1 .8"/><circle cx="588.4" cy="323.4" r="1.8" fill="none" stroke="#e838e8" stroke-width=".8" stroke-dasharray="1 .8"/><polyline points="537.6,339.0 549.7,349.6 562.4,341.1 575.7,352.3 588.4,360.3" fill="none" stroke="#20207a" stroke-width="1.1"/><path d="M549.7 347.0l2.6 2.6l-2.6 2.6l-2.6 -2.6z" fill="#101080"/><path d="M562.4 338.5l2.6 2.6l-2.6 2.6l-2.6 -2.6z" fill="#101080"/><path d="M575.7 349.7l2.6 2.6l-2.6 2.6l-2.6 -2.6z" fill="#101080"/><path d="M588.4 357.7l2.6 2.6l-2.6 2.6l-2.6 -2.6z" fill="#101080"/><g fill="none" stroke="#000" stroke-width="1"><path d="M399.5 399.8L418.6 383.7H452.5V409.3L433.7 425.4H399.5z"/><path d="M418.6 383.7V409.3H452.5M418.6 409.3L399.5 425.4"/></g><path d="M430.5 383.9L419.2 397.1M401.4 405.2L409.5 399.8M439.6 405.7L429.4 417" stroke="#000" stroke-width="1.4" fill="none"/><path d="M427.2 385.8L431.5 384.2L438.5 392.8L447.7 397.7L443.9 400.9L435.3 397.1z" fill="#8e2f62"/><path d="M410 400.3L413.8 398.7L422.4 405.2L429.4 415.4L426.7 420.2L420.3 410.6L413.8 403.6z" fill="#9a9ff2" stroke="#5a5ab0" stroke-width=".4"/></svg>
<div class="a" style="left:389px;top:443px;width:207px;height:47px;background:transparent;border:1px solid #98adc9"></div>
<div class="t" style="left:390px;top:444px;font-size:12px;transform:scaleX(0.806);transform-origin:0 0;">データにマーカーが付けられた折れ線グラフで</div>
<div class="t" style="left:390px;top:457px;font-size:12px;transform:scaleX(0.708);transform-origin:0 0;">す。</div>
<div class="btn" style="left:391px;top:498px;width:206px;"></div>
<div class="t" style="left:438px;top:501px;font-size:12px;transform:scaleX(0.911);transform-origin:0 0;">サンプルを表示する(<u>V</u>)</div>
<div class="btn" style="left:298px;top:532px;width:71px;"></div>
<div class="t" style="left:309px;top:535px;font-size:12px;transform:scaleX(0.767);transform-origin:0 0;">キャンセル</div>
<div class="btn" style="left:379px;top:532px;width:71px;border-color:#c9c7ba;background:#f0eee4;"></div>
<div class="t" style="left:398px;top:535px;font-size:12px;color:#aca899;transform:scaleX(0.874);transform-origin:0 0;">&lt; 戻る</div>
<div class="btn" style="left:454px;top:532px;width:71px;box-shadow:inset 0 0 0 1px #fbd98a,inset 0 -2px 0 0 #e59700,inset 0 2px 0 0 #ffe7a8;"></div>
<div class="t" style="left:466px;top:535px;font-size:12px;transform:scaleX(0.980);transform-origin:0 0;">次へ(<u>N</u>) &gt;</div>
<div class="btn" style="left:535px;top:532px;width:71px;"></div>
<div class="t" style="left:551px;top:535px;font-size:12px;transform:scaleX(0.966);transform-origin:0 0;">完了(<u>F</u>)</div>
</body></html>
